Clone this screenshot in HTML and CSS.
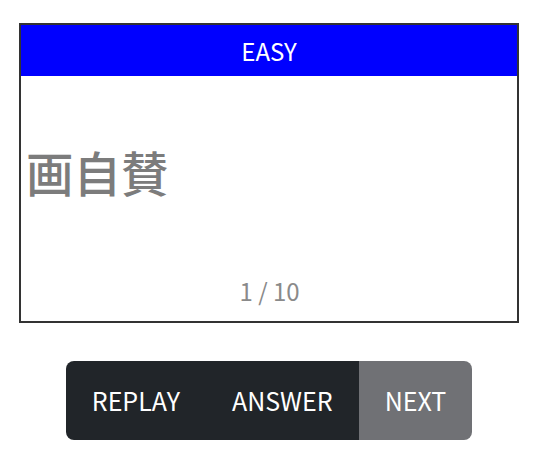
FILE: index.html
```html
<!DOCTYPE html>
<html lang="ja">
<head>
<meta charset="utf-8">
<title>Flashcard</title>
<link rel="stylesheet" href="styles.css">
</head>
<body>
<div class="page">
  <div class="card">
    <div class="card-header">EASY</div>
    <div class="card-body">
      <div class="word">画自賛</div>
      <div class="counter">1 / 10</div>
    </div>
  </div>
  <div class="controls">
    <div class="btn-group">
      <button class="btn btn-dark">REPLAY</button>
      <button class="btn btn-dark">ANSWER</button>
      <button class="btn btn-secondary">NEXT</button>
    </div>
  </div>
</div>
</body>
</html>
```
FILE: styles.css
```css
html, body {
  margin: 0;
  padding: 0;
  background: #ffffff;
}
body {
  font-family: "Noto Sans CJK JP", "Noto Sans", sans-serif;
}
.page {
  padding: 23px 0 0 19px;
  width: 500px;
}
.card {
  box-sizing: border-box;
  width: 500px;
  height: 300px;
  border: 2px solid #333333;
  display: flex;
  flex-direction: column;
}
.card-header {
  height: 51px;
  background: #0000ff;
  color: #ffffff;
  font-size: 24px;
  display: flex;
  align-items: center;
  justify-content: center;
}
.card-body {
  flex: 1;
  display: flex;
  flex-direction: column;
  padding: 0 4px 12px 5px;
}
.word {
  margin-top: 72px;
  font-size: 47.5px;
  line-height: 1;
  font-weight: 500;
  color: #7c7c7c;
}
.counter {
  margin-top: auto;
  text-align: center;
  font-size: 24px;
  line-height: 36px;
  color: #8a8a8a;
}
.controls {
  display: flex;
  justify-content: center;
  margin-top: 38px;
}
.btn-group {
  display: flex;
  border-radius: 8px;
  overflow: hidden;
}
.btn {
  font-family: "Noto Sans CJK JP", "Noto Sans", sans-serif;
  font-size: 25px;
  line-height: 41px;
  padding: 19px 26px;
  border: 0;
  margin: 0;
  color: #ffffff;
}
.btn-dark {
  background: #212529;
}
.btn-secondary {
  background: #707175;
}
```
